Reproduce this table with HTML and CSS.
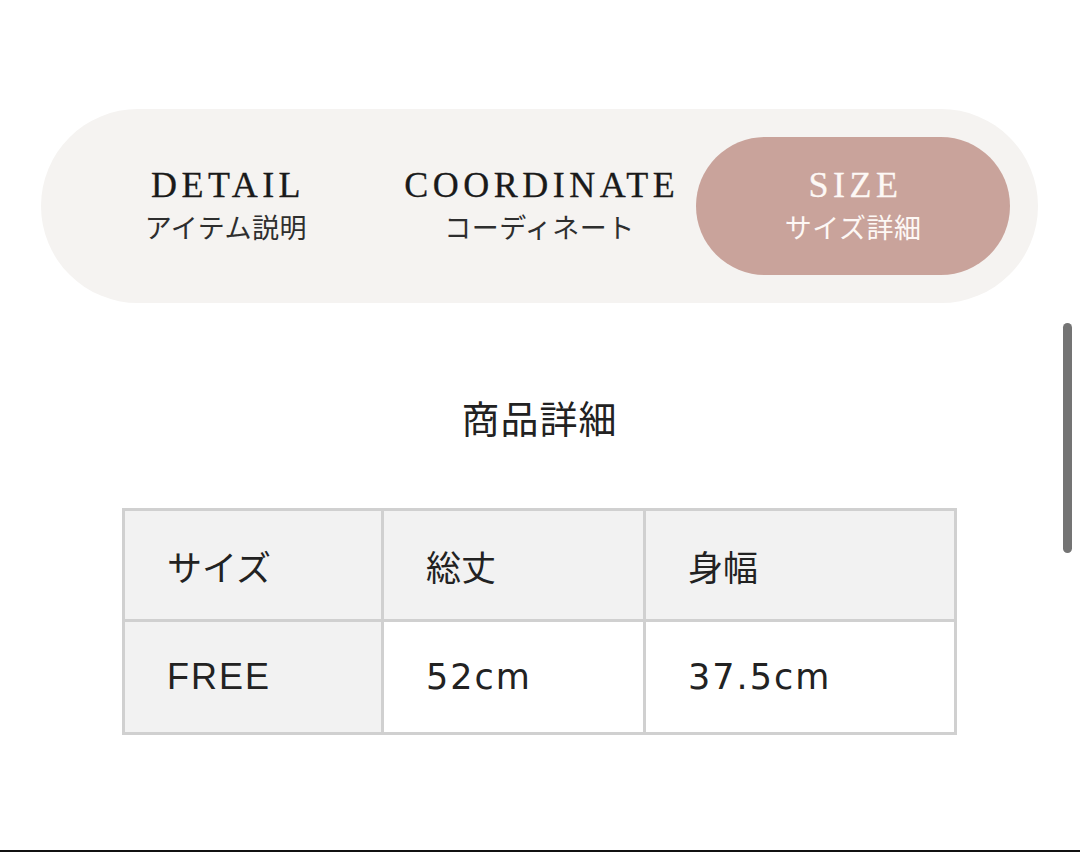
FILE: index.html
```html
<!DOCTYPE html>
<html lang="ja">
<head>
<meta charset="utf-8">
<title>SIZE</title>
<link rel="stylesheet" href="styles.css">
</head>
<body>
<div class="page">
  <nav class="tabs">
    <div class="tab">
      <span class="tab-en">DETAIL</span>
      <span class="tab-ja">アイテム説明</span>
    </div>
    <div class="tab">
      <span class="tab-en">COORDINATE</span>
      <span class="tab-ja">コーディネート</span>
    </div>
    <div class="tab tab-active">
      <span class="tab-en">SIZE</span>
      <span class="tab-ja">サイズ詳細</span>
    </div>
  </nav>

  <h2 class="heading">商品詳細</h2>

  <div class="size-table">
    <div class="cell cell-gray">サイズ</div>
    <div class="cell cell-gray">総丈</div>
    <div class="cell cell-gray">身幅</div>
    <div class="cell cell-gray cell-word">FREE</div>
    <div class="cell cell-latin">52cm</div>
    <div class="cell cell-latin">37.5cm</div>
  </div>

  <div class="scrollbar"></div>
</div>
</body>
</html>
```

FILE: styles.css
```css
* {
  box-sizing: border-box;
}

html, body {
  margin: 0;
  padding: 0;
  background: #ffffff;
}

body {
  font-family: "Noto Sans CJK JP", "Noto Sans", sans-serif;
  color: #222222;
}

.page {
  position: relative;
  height: 852px;
  padding: 109px 42px 0 41px;
  border-bottom: 2px solid #111111;
  overflow: hidden;
}

.tabs {
  display: grid;
  grid-template-columns: 1fr 1fr 1fr;
  padding: 28px;
  height: 194px;
  border-radius: 97px;
  background: #f5f3f1;
}

.tab {
  display: flex;
  flex-direction: column;
  align-items: center;
  justify-content: center;
  height: 138px;
  border-radius: 69px;
  color: #1a1a1a;
  padding-bottom: 2px;
}

.tab-active {
  background: #c9a39b;
  color: #fdf8f5;
}

.tab-en {
  font-family: "Liberation Serif", "DejaVu Serif", serif;
  font-size: 36px;
  line-height: 40px;
  letter-spacing: 4.5px;
  margin-right: -4.5px;
  -webkit-text-stroke: 0.3px currentColor;
}

.tab-ja {
  font-size: 27px;
  line-height: 36px;
  letter-spacing: 0.5px;
  margin-top: 4px;
}

.tab:not(.tab-active) .tab-ja {
  color: #2e2e2e;
}

.heading {
  margin: 94px 0 0;
  text-align: center;
  font-size: 38px;
  line-height: 40px;
  font-weight: 400;
  letter-spacing: 1px;
  color: #222222;
}

.size-table {
  display: grid;
  grid-template-columns: 256px 259px 308px;
  grid-template-rows: 108px 110px;
  gap: 3px;
  padding: 3px;
  width: 835px;
  margin: 71px auto 0;
  background: #d0d0d0;
}

.cell {
  display: flex;
  align-items: center;
  padding-left: 42px;
  background: #ffffff;
  font-size: 35px;
  color: #222222;
}

.cell-gray {
  background: #f2f2f2;
}

.cell-latin {
  font-family: "DejaVu Sans", "Liberation Sans", sans-serif;
  font-size: 35px;
  letter-spacing: 2px;
}

.cell-word {
  font-family: "Liberation Sans", "Noto Sans", sans-serif;
  font-size: 36px;
  letter-spacing: 2px;
}

.scrollbar {
  position: absolute;
  top: 323px;
  right: 8px;
  width: 9px;
  height: 230px;
  border-radius: 5px;
  background: #747474;
}
```
